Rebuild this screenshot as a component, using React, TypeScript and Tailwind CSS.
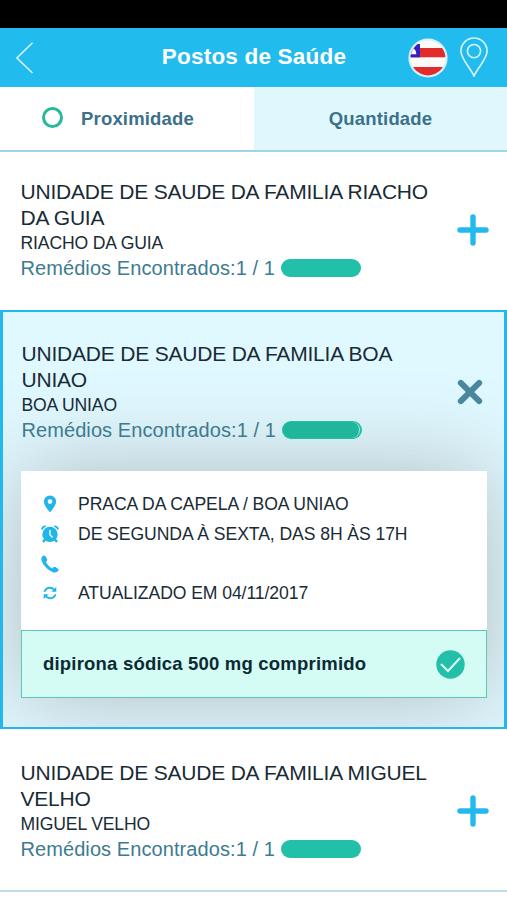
import clsx from "clsx";

type TUnit = {
    lines: string[];
    place: string;
    found: string;
};

type TUnitHeaderProps = TUnit & {
    open?: boolean;
};

const FIRST: TUnit = {
    lines: ["UNIDADE DE SAUDE DA FAMILIA RIACHO", "DA GUIA"],
    place: "RIACHO DA GUIA",
    found: "1 / 1",
};

const SELECTED: TUnit = {
    lines: ["UNIDADE DE SAUDE DA FAMILIA BOA", "UNIAO"],
    place: "BOA UNIAO",
    found: "1 / 1",
};

const LAST: TUnit = {
    lines: ["UNIDADE DE SAUDE DA FAMILIA MIGUEL", "VELHO"],
    place: "MIGUEL VELHO",
    found: "1 / 1",
};

const DETAILS = [
    { Icon: PinIcon, text: "PRACA DA CAPELA / BOA UNIAO" },
    { Icon: AlarmIcon, text: "DE SEGUNDA À SEXTA, DAS 8H ÀS 17H" },
    { Icon: PhoneIcon, text: "" },
    { Icon: SyncIcon, text: "ATUALIZADO EM 04/11/2017" },
];

function PinIcon () {
    return (
        <svg className="h-[18px] w-[18px]" viewBox="0 0 18 18">
            <path
                d="M9 0.4 A6.2 6.2 0 0 0 2.8 6.6 C2.8 10.8 9 17.4 9 17.4 C9 17.4 15.2 10.8 15.2 6.6 A6.2 6.2 0 0 0 9 0.4 Z M9 4.3 A2.3 2.3 0 1 1 9 8.9 A2.3 2.3 0 1 1 9 4.3 Z"
                fill="currentColor"
                fillRule="evenodd"
            />
        </svg>
    );
}

function AlarmIcon () {
    return (
        <svg className="h-[18px] w-[18px]" fill="none" stroke="currentColor" viewBox="0 0 18 18">
            <circle cx="9" cy="9.4" fill="currentColor" r="7.7" stroke="none" />
            <path d="M1 4.6 C1.2 2.8 2.8 1.4 4.8 1.2 M17 4.6 C16.8 2.8 15.2 1.4 13.2 1.2" strokeWidth="1.8" />
            <path d="M4.2 14.2 L2 17 M13.8 14.2 L16 17" strokeWidth="2.4" />
            <path d="M9 5 V10 L11.6 12.4" stroke="#e6f8fe" strokeWidth="1.5" />
        </svg>
    );
}

function PhoneIcon () {
    return (
        <svg className="h-[18px] w-[18px]" viewBox="0 0 18 18">
            <path
                d="M1.8 1 C0.3 2.2 0 4.2 1 6.6 C2.8 11 6.8 15 11.4 17 C13.6 17.9 15.8 17.6 17.1 16.1 C17.8 15.3 17.7 14.4 16.9 13.8 L14.3 12.1 C13.5 11.6 12.8 11.8 12.2 12.4 L11.2 13.4 C8.7 12.2 6.1 9.6 4.9 7.1 L5.9 6 C6.4 5.4 6.4 4.7 6 4 L4.4 1.2 C3.8 0.2 2.8 0.2 1.8 1 Z"
                fill="currentColor"
            />
        </svg>
    );
}

function SyncIcon () {
    return (
        <svg className="h-[14px] w-[14px]" fill="none" viewBox="0 0 14 14">
            <path
                d="M1.4 5.8 C2.4 2.9 4.5 1.7 7 1.7 C8.8 1.7 10.2 2.5 11.3 3.8 M12.6 8.2 C11.6 11.1 9.5 12.3 7 12.3 C5.2 12.3 3.8 11.5 2.7 10.2"
                stroke="currentColor"
                strokeWidth="1.9"
            />
            <path d="M13.3 0.8 V5.8 H8.4 Z M0.7 13.2 V8.2 H5.6 Z" fill="currentColor" />
        </svg>
    );
}

function BahiaFlag () {
    return (
        <svg className="h-10 w-10" viewBox="0 0 40 40">
            <defs>
                <clipPath id="flag">
                    <circle cx="20" cy="20" r="17.4" />
                </clipPath>
            </defs>
            <circle cx="20" cy="20" fill="#d5f2fb" r="19.6" />
            <g clipPath="url(#flag)">
                <rect fill="#fffafa" height="40" width="40" />
                <rect fill="#e02d2b" height="9.3" width="40" y="10" />
                <rect fill="#e02d2b" height="10" width="40" y="29" />
                <rect fill="#3220c8" height="13.3" width="12" y="6" />
                <path d="M2 10 L5.5 10 L7.8 13 L8.3 16.3 L2 16.3 Z" fill="#fffafa" />
            </g>
        </svg>
    );
}

function Header () {
    return (
        <header className="flex h-[59px] items-center justify-between bg-[#22bbee] pl-4 pr-[19px] pt-px">
            <svg className="h-8 w-[84px]" fill="none" viewBox="0 0 84 32">
                <path d="M16.5 0.7 L0.9 16 L16.5 31" stroke="#d8f4fd" strokeWidth="1.6" />
            </svg>

            <h1 className="-mt-0.5 text-[22.5px] font-bold tracking-[0.2px] text-white">
                Postos de Saúde
            </h1>

            <div className="flex items-center gap-3">
                <BahiaFlag />

                <svg className="-mt-0.5 h-10 w-7" fill="none" stroke="#d8f4fd" strokeWidth="1.6" viewBox="0 0 28 40">
                    <path d="M14 39 C10.5 31 0.9 22 0.9 14.1 A13.1 13.1 0 0 1 27.1 14.1 C27.1 22 17.5 31 14 39 Z" />
                    <circle cx="14" cy="14.1" r="6.6" />
                </svg>
            </div>
        </header>
    );
}

function Tabs () {
    return (
        <nav className="flex h-[65px] border-b-2 border-[#a3d3e9] text-[18.5px] font-bold tracking-[0.18px] text-[#3b7189]">
            <div className="flex w-[254px] items-center bg-white pl-[42px]">
                <span className="-mt-0.5 h-[21px] w-[21px] rounded-full border-[3px] border-[#27b99c]" />
                <span className="pl-[18px]">Proximidade</span>
            </div>

            <div className="flex flex-1 items-center justify-center bg-[#e1f7fe]">
                Quantidade
            </div>
        </nav>
    );
}

function UnitHeader ({
    lines,
    place,
    found,
    open,
}: TUnitHeaderProps) {
    return (
        <div className="flex items-center justify-between">
            <div className="whitespace-nowrap pl-[0.5px] text-[#192b35]">
                <h2 className="text-[21px] leading-[26px] tracking-[-0.2px]">
                    {lines.map((line) => (
                        <span key={line} className="block">{line}</span>
                    ))}
                </h2>

                <p className="text-[17.6px] leading-[24px] tracking-[-0.15px]">{place}</p>

                <div className="flex h-[26px] items-center gap-[6px] text-[20px] tracking-[0.08px] text-[#3d7b90]">
                    <span className="pb-px">Remédios Encontrados:{found}</span>
                    <span className="flex h-[18px] w-20 rounded-full bg-[#22c0a8]">
                        {open && (
                            <span className="my-px ml-px w-[77px] rounded-full border-r border-[#a5ebdc] bg-[#1fb69c]" />
                        )}
                    </span>
                </div>
            </div>

            <svg
                className={clsx("-mt-px h-8 w-8", open ? "rotate-45 text-[#4a879c]" : "text-[#22b9ef]")}
                fill="none"
                stroke="currentColor"
                strokeLinecap="round"
                strokeWidth={open ? 6 : 5.4}
                viewBox="0 0 32 32"
            >
                <path d="M16 3 V29 M3 16 H29" />
            </svg>
        </div>
    );
}

export default function App () {
    return (
        <main className="h-[900px] w-[507px] overflow-hidden bg-white font-['Liberation_Sans',Arial,sans-serif]">
            <div className="h-7 bg-black" />
            <Header />
            <Tabs />

            <section className="h-[158px] pl-5 pr-[18px] pt-[27px]">
                <UnitHeader {...FIRST} />
            </section>

            <section className="h-[419px] overflow-hidden border-x-[3px] border-y-2 border-[#22b7ee] bg-[#e0f8ff] px-[18px] pt-[29px]">
                <UnitHeader {...SELECTED} open />

                <div className="mt-[28px] h-[227px] w-[466px] bg-white shadow-[0_0_90px_rgba(100,90,90,0.38)]">
                    <ul className="h-[159px] pl-[18px] pt-[18.5px]">
                        {DETAILS.map(({ Icon, text }) => (
                            <li key={text} className="flex h-[29.7px] items-center text-[17.6px] tracking-[-0.08px] text-[#192b35]">
                                <span className="flex w-[22px] justify-center text-[#22b5eb]">
                                    <Icon />
                                </span>
                                <span className="pl-[17px]">{text}</span>
                            </li>
                        ))}
                    </ul>

                    <div className="flex h-[68px] items-center justify-between border border-[#5cc9b2] bg-[#d4fbf4] px-[21px] text-[18.5px] font-bold tracking-[0.2px] text-[#0c2a33]">
                        <span>dipirona sódica 500 mg comprimido</span>
                        <svg className="h-[29px] w-[29px]" fill="none" viewBox="0 0 29 29">
                            <circle cx="14.5" cy="14.5" fill="#23bfa8" r="14.2" />
                            <path d="M5 14 L12 21 L24 8" stroke="#d9fbf5" strokeWidth="2" />
                        </svg>
                    </div>
                </div>
            </section>

            <section className="h-[163px] border-b-2 border-[#bcdde5] pl-5 pr-[18px] pt-[31px]">
                <UnitHeader {...LAST} />
            </section>
        </main>
    );
}
